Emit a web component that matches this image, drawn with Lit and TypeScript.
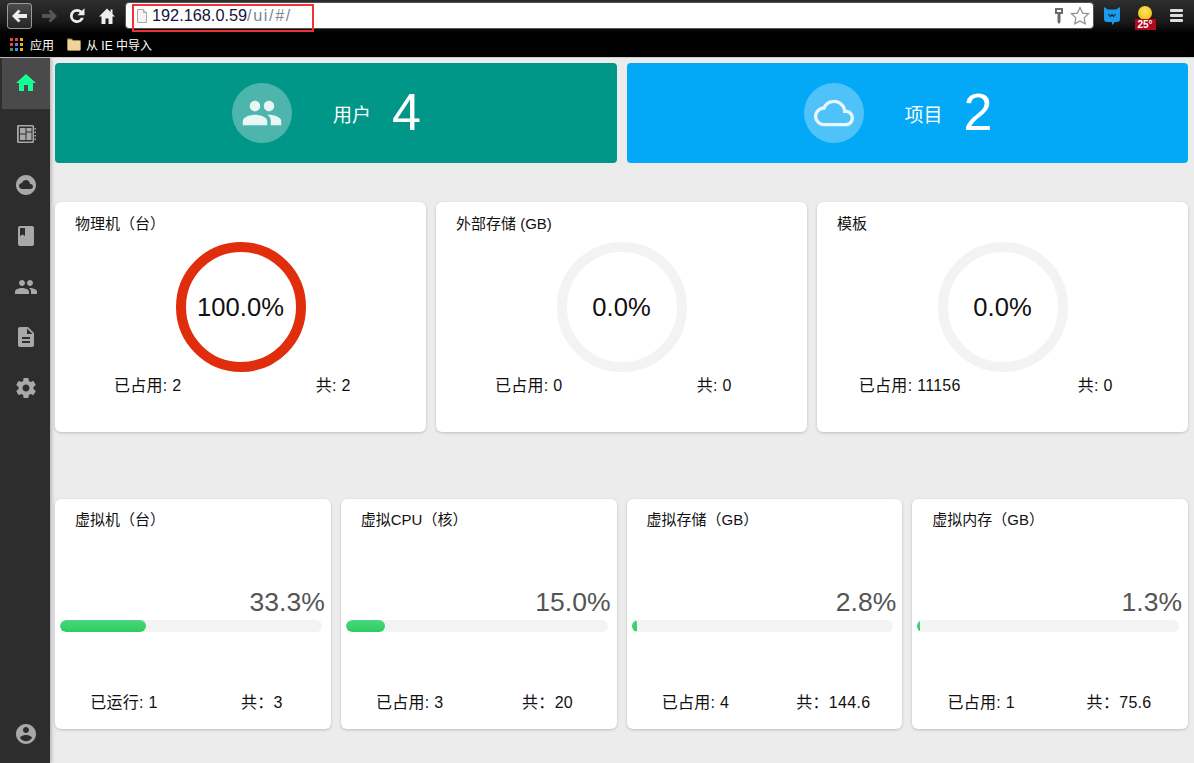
import { LitElement, html, css } from 'lit';
import { customElement } from 'lit/decorators.js';

const ICONS: Record<string, string> = {
  home: 'M10 20v-6h4v6h5v-8h3L12 3 2 12h3v8z',
  cloudCircle: 'M12 2C6.48 2 2 6.48 2 12s4.48 10 10 10 10-4.48 10-10S17.52 2 12 2zm4.5 14H8c-1.66 0-3-1.34-3-3s1.34-3 3-3l.14.01C8.58 8.28 10.13 7 12 7c2.21 0 4 1.79 4 4h.5c1.38 0 2.5 1.12 2.5 2.5S17.88 16 16.5 16z',
  book: 'M18 2H6c-1.1 0-2 .9-2 2v16c0 1.1.9 2 2 2h12c1.1 0 2-.9 2-2V4c0-1.1-.9-2-2-2zM6 4h5v8l-2.5-1.5L6 12V4z',
  people: 'M16 11c1.66 0 2.99-1.34 2.99-3S17.66 5 16 5c-1.66 0-3 1.34-3 3s1.34 3 3 3zm-8 0c1.66 0 2.99-1.34 2.99-3S9.66 5 8 5C6.34 5 5 6.34 5 8s1.34 3 3 3zm0 2c-2.33 0-7 1.17-7 3.5V19h14v-2.5c0-2.33-4.67-3.5-7-3.5zm8 0c-.29 0-.62.02-.97.05 1.16.84 1.97 1.97 1.97 3.45V19h6v-2.5c0-2.33-4.67-3.5-7-3.5z',
  doc: 'M14 2H6c-1.1 0-1.99.9-1.99 2L4 20c0 1.1.89 2 1.99 2H18c1.1 0 2-.9 2-2V8l-6-6zm2 16H8v-2h8v2zm0-4H8v-2h8v2zm-3-5V3.5L18.5 9H13z',
  gear: 'M19.43 12.98c.04-.32.07-.64.07-.98s-.03-.66-.07-.98l2.11-1.65c.19-.15.24-.42.12-.64l-2-3.46c-.12-.22-.39-.3-.61-.22l-2.49 1c-.52-.4-1.08-.73-1.69-.98l-.38-2.65C14.46 2.18 14.25 2 14 2h-4c-.25 0-.46.18-.49.42l-.38 2.65c-.61.25-1.17.59-1.69.98l-2.49-1c-.23-.09-.49 0-.61.22l-2 3.46c-.13.22-.07.49.12.64l2.11 1.65c-.04.32-.07.65-.07.98s.03.66.07.98l-2.11 1.65c-.19.15-.24.42-.12.64l2 3.46c.12.22.39.3.61.22l2.49-1c.52.4 1.08.73 1.69.98l.38 2.65c.03.24.24.42.49.42h4c.25 0 .46-.18.49-.42l.38-2.65c.61-.25 1.17-.59 1.69-.98l2.49 1c.23.09.49 0 .61-.22l2-3.46c.12-.22.07-.49-.12-.64l-2.11-1.65zM12 15.5c-1.93 0-3.5-1.57-3.5-3.5s1.57-3.5 3.5-3.5 3.5 1.57 3.5 3.5-1.57 3.5-3.5 3.5z',
  account: 'M12 2C6.48 2 2 6.48 2 12s4.48 10 10 10 10-4.48 10-10S17.52 2 12 2zm0 3c1.66 0 3 1.34 3 3s-1.34 3-3 3-3-1.34-3-3 1.34-3 3-3zm0 14.2c-2.5 0-4.71-1.28-6-3.22.03-1.99 4-3.08 6-3.08 1.99 0 5.97 1.09 6 3.08-1.29 1.94-3.5 3.22-6 3.22z',
  cloudOutline: 'M19.35 10.04C18.67 6.59 15.64 4 12 4 9.11 4 6.6 5.64 5.35 8.04 2.34 8.36 0 10.91 0 14c0 3.31 2.69 6 6 6h13c2.76 0 5-2.24 5-5 0-2.64-2.05-4.78-4.65-4.96zM19 18H6c-2.21 0-4-1.79-4-4s1.79-4 4-4h.71C7.37 7.69 9.48 6 12 6c3.04 0 5.5 2.46 5.5 5.5v.5H19c1.66 0 3 1.34 3 3s-1.34 3-3 3z',
};

const icon = (name: string, size = 24) => html`
  <svg width=${size} height=${size} viewBox="0 0 24 24" fill="currentColor"><path d=${ICONS[name]}></path></svg>
`;

// notebook with a small dashboard on it, second sidebar entry
const readerIcon = html`
  <svg width="24" height="24" viewBox="0 0 24 24" fill="currentColor">
    <path d="M4.500 3h14c1 0 1.500.6 1.500 1.500v15c0 .9-.5 1.500-1.500 1.500h-14C3.600 21 3 20.400 3 19.500v-15C3 3.600 3.600 3 4.500 3zm.3 1.500v15h13.700v-15z" fill-rule="evenodd"></path>
    <path d="M6 6h5.500v5.500H6zM12.500 6h5v3.500h-5zM12.500 10.500h5V18h-5zM6 12.500h5.500V18H6z"></path>
    <path d="M20.500 6h1.500v1.500h-1.500zM20.500 9.500h1.500V11h-1.500zM20.500 13h1.500v1.500h-1.500zM20.500 16.500h1.500V18h-1.500z"></path>
  </svg>
`;

const APP_COLORS = ['#e8453c', '#e8453c', '#f4b400', '#e8453c', '#4a8af4', '#f4b400', '#2f9e5b', '#4a8af4', '#f4b400'];

interface Gauge { title: string; pct: string; used: string; total: string; color: string; }
interface Bar { title: string; fill: number; label: string; used: string; total: string; }

const GAUGES: Gauge[] = [
  { title: '物理机（台）', pct: '100.0%', used: '已占用: 2', total: '共: 2', color: '#e02d0c' },
  { title: '外部存储 (GB)', pct: '0.0%', used: '已占用: 0', total: '共: 0', color: '#f3f3f3' },
  { title: '模板', pct: '0.0%', used: '已占用: 11156', total: '共: 0', color: '#f3f3f3' },
];

const BARS: Bar[] = [
  { title: '虚拟机（台）', fill: 86, label: '33.3%', used: '已运行: 1', total: '共：3' },
  { title: '虚拟CPU（核）', fill: 39, label: '15.0%', used: '已占用: 3', total: '共：20' },
  { title: '虚拟存储（GB）', fill: 5, label: '2.8%', used: '已占用: 4', total: '共：144.6' },
  { title: '虚拟内存（GB）', fill: 3, label: '1.3%', used: '已占用: 1', total: '共：75.6' },
];

@customElement('app-root')
export class AppRoot extends LitElement {
  static override styles = css`
    :host {
      display: block;
      width: 1194px;
      height: 763px;
      overflow: hidden;
      position: relative;
      font-family: "Liberation Sans", "Noto Sans CJK SC", sans-serif;
      color: #111;
      background: #000;
    }

    .toolbar {
      height: 33px;
      display: flex;
      align-items: flex-start;
      padding-top: 3px;
      box-sizing: border-box;
      background: linear-gradient(#2e2e2e, #1a1a1a 65%, #020202);
      color: #e8e8e8;
    }

    .nav {
      width: 25px;
      height: 26px;
      display: flex;
      align-items: center;
      justify-content: center;
      flex: none;
    }

    .nav.back {
      margin-left: 7px;
      box-sizing: border-box;
      border: 1px solid #9a9a9a;
      border-radius: 3px;
      background: linear-gradient(#4c4c4c, #262626);
    }

    .nav.fwd { margin-left: 4px; color: #555; }
    .nav.reload { margin-left: 3px; }
    .nav.house { margin-left: 5px; }

    .omnibox {
      margin-left: 6px;
      margin-top: -1px;
      width: 969px;
      height: 27px;
      box-sizing: border-box;
      flex: none;
      display: flex;
      align-items: center;
      background: #fff;
      border: 1px solid #555;
      border-radius: 4px;
      padding: 0 3px 0 11px;
      font-size: 16.300px;
    }

    .page-icon { flex: none; margin-right: 5px; }
    .host { color: #14143c; }
    .path { color: #7b8798; flex: 1; letter-spacing: 1.600px; }

    .key { margin-right: 6px; flex: none; }

    .ext { flex: none; display: flex; }
    .ext.cat { margin-left: 9px; margin-top: 3px; }

    .weather {
      margin-left: 13px;
      margin-top: 3px;
      width: 22px;
      height: 26px;
      display: flex;
      flex-direction: column;
      align-items: center;
      flex: none;
    }

    .sun {
      width: 14px;
      height: 14px;
      border-radius: 50%;
      background: radial-gradient(circle at 50% 40%, #ffe75a, #eab308);
      flex: none;
    }

    .temp {
      width: 21px;
      height: 11px;
      margin-top: -1px;
      background: #b0081c;
      color: #fff;
      font-size: 10px;
      line-height: 11px;
      font-weight: 700;
      text-align: center;
    }

    .menu {
      margin-left: 14px;
      margin-top: 6px;
      width: 13px;
      display: flex;
      flex-direction: column;
      gap: 2px;
      flex: none;
    }

    .menu i {
      display: block;
      height: 3px;
      border-radius: 1px;
      background: #ddd;
    }

    .bookmarks {
      height: 24px;
      box-sizing: border-box;
      padding: 0 0 2px 10px;
      background: #000;
      color: #fff;
      font-size: 12px;
      display: flex;
      align-items: center;
    }

    .apps {
      display: grid;
      grid-template-columns: repeat(3, 3px);
      gap: 2px;
      margin-right: 7px;
    }

    .apps i { display: block; width: 3px; height: 3px; }
    .folder { margin-left: 12px; margin-right: 5px; }

    .shell {
      height: 706px;
      display: flex;
      border-top: 1px solid #cfcfcf;
      box-sizing: border-box;
      background: #ececec;
    }

    .sidebar {
      width: 50px;
      flex: none;
      box-sizing: border-box;
      padding-left: 2px;
      background: #2d2d2d;
      box-shadow: 1px 0 4px rgba(0, 0, 0, 0.3);
      color: #a8a8a8;
      display: flex;
      flex-direction: column;
    }

    .side-item {
      height: 50.800px;
      display: flex;
      align-items: center;
      justify-content: center;
      flex: none;
    }

    .side-item.active {
      background: #4a4a4a;
      color: #14ff96;
    }

    .side-item.bottom { margin-top: auto; margin-bottom: 4px; }

    .main {
      flex: 1;
      padding: 5px 6px 0 5px;
    }

    .hero-row, .gauge-row, .bar-row {
      display: grid;
      gap: 10px;
    }

    .hero-row { grid-template-columns: 1fr 1fr; }
    .gauge-row { grid-template-columns: repeat(3, 1fr); margin-top: 39px; }
    .bar-row { grid-template-columns: repeat(4, 1fr); margin-top: 67px; }

    .hero {
      height: 100px;
      border-radius: 4px;
      color: #fff;
      display: flex;
      align-items: center;
      padding-left: 177px;
    }

    .hero.teal { background: #009688; }
    .hero.blue { background: #03a9f6; }

    .hero-icon {
      width: 60px;
      height: 60px;
      border-radius: 50%;
      background: rgba(255, 255, 255, 0.3);
      display: flex;
      align-items: center;
      justify-content: center;
      color: rgba(255, 255, 255, 0.87);
      flex: none;
    }

    .hero-label { margin-left: 41px; font-size: 19px; }
    .hero-num { margin-left: 21px; font-size: 52px; line-height: 60px; margin-bottom: 2px; }

    .card {
      height: 230px;
      box-sizing: border-box;
      background: #fff;
      border-radius: 6px;
      box-shadow: 0 1px 3px rgba(0, 0, 0, 0.2);
      padding-top: 12px;
    }

    .bar-card { padding-top: 11px; }

    .title {
      font-size: 15px;
      line-height: 20px;
      padding-left: 20px;
    }

    .donut {
      width: 130px;
      height: 130px;
      box-sizing: border-box;
      margin: 8px auto 0;
      border-radius: 50%;
      border: 10px solid;
      display: flex;
      align-items: center;
      justify-content: center;
      font-size: 25.600px;
    }

    .stats {
      display: grid;
      grid-template-columns: 1fr 1fr;
      text-align: center;
      font-size: 16px;
      line-height: 20px;
      letter-spacing: 0.300px;
      margin-top: 4px;
    }

    .bar-card .stats { margin-top: 61px; }

    .pct {
      margin-top: 57px;
      padding-right: 6px;
      text-align: right;
      font-size: 26.500px;
      line-height: 30px;
      color: #555;
    }

    .track {
      height: 12px;
      margin: 3px 9px 0 5px;
      border-radius: 6px;
      background: #f3f3f3;
      overflow: hidden;
    }

    .fill {
      height: 100%;
      border-radius: 6px;
      background: linear-gradient(#4bd681, #2ecc5f);
    }

    .annotation {
      position: absolute;
      left: 132px;
      top: 4px;
      width: 182px;
      height: 28px;
      box-sizing: border-box;
      border: 2px solid #ee3338;
      pointer-events: none;
    }
  `;

  renderChrome() {
    return html`
      <div class="toolbar">
        <div class="nav back">
          <svg width="18" height="18" viewBox="0 0 18 18" fill="#eee"><path d="M7.500 2.500l2 2L7 7h9v4H7l2.500 2.500-2 2L1 9z"></path></svg>
        </div>
        <div class="nav fwd">
          <svg width="18" height="18" viewBox="0 0 18 18" fill="currentColor"><path d="M10.500 2.500l-2 2L11 7H2v4h9l-2.500 2.500 2 2L17 9z"></path></svg>
        </div>
        <div class="nav reload">
          <svg width="18" height="18" viewBox="0 0 18 18" fill="#eee"><path d="M9 2a7 7 0 1 0 6.800 8.700h-3A4.200 4.200 0 1 1 9 4.800c1.100 0 2 .4 2.800 1L9.500 8.200H16.500V1.200l-2.600 2.600A7 7 0 0 0 9 2z"></path></svg>
        </div>
        <div class="nav house">
          <svg width="18" height="18" viewBox="0 0 18 18" fill="#eee"><path d="M9 1.500L1 9.500h2.500V17H7.500v-5.500h3V17h4V9.500H17L14.500 7V2.500H12.500v2.500z"></path></svg>
        </div>
        <div class="omnibox">
          <svg class="page-icon" width="10" height="14" viewBox="0 0 10 14"><path d="M.5.500h6l3 3v10h-9z" fill="#f4f4f4" stroke="#a8a8a8"></path><path d="M6.500.500v3h3" fill="#ddd" stroke="#a8a8a8"></path></svg>
          <span class="host">192.168.0.59</span><span class="path">/ui/#/</span>
          <svg class="key" width="10" height="18" viewBox="0 0 10 18" fill="#6a6a6a"><path d="M1 1h8v6H6.500v8l-1.500 2-1.500-2V7H1zM3 3v2h4V3z" fill-rule="evenodd"></path></svg>
          <svg width="20" height="20" viewBox="0 0 20 20" fill="#fff" stroke="#8f8f8f" stroke-width="1.200"><path d="M10 1.500l2.600 5.600 6 .7-4.500 4.100 1.200 6L10 15l-5.300 2.900 1.200-6L1.400 7.800l6-.7z"></path></svg>
        </div>
        <div class="ext cat">
          <svg width="18" height="20" viewBox="0 0 18 20"><path d="M1 1l4 2.500h8L17 1v12c0 2-1 3-3 3h-2l-3 3v-3H4c-2 0-3-1-3-3z" fill="#1e9be8"></path><path d="M5.500 8l2 2.500L9 8.500l1.500 2L12.500 8" fill="none" stroke="#0b2b4a" stroke-width="1.200"></path></svg>
        </div>
        <div class="weather"><div class="sun"></div><div class="temp">25°</div></div>
        <div class="menu"><i></i><i></i><i></i></div>
      </div>
      <div class="bookmarks">
        <div class="apps">${APP_COLORS.map((c) => html`<i style="background:${c}"></i>`)}</div>
        <span>应用</span>
        <svg class="folder" width="15" height="13" viewBox="0 0 15 13">
          <path d="M1.500 1h4l1.500 1.500h6.500q1 0 1 1V11q0 1.500-1 1.500h-11q-1 0-1-1.500V2q0-1 1-1z" fill="#efd39a" stroke="#a8854f"></path>
        </svg>
        <span>从 IE 中导入</span>
      </div>
    `;
  }

  renderGauge(g: Gauge) {
    return html`
      <div class="card">
        <div class="title">${g.title}</div>
        <div class="donut" style="border-color:${g.color}">${g.pct}</div>
        <div class="stats"><span>${g.used}</span><span>${g.total}</span></div>
      </div>
    `;
  }

  renderBar(b: Bar) {
    return html`
      <div class="card bar-card">
        <div class="title">${b.title}</div>
        <div class="pct">${b.label}</div>
        <div class="track"><div class="fill" style="width:${b.fill}px"></div></div>
        <div class="stats"><span>${b.used}</span><span>${b.total}</span></div>
      </div>
    `;
  }

  override render() {
    return html`
      ${this.renderChrome()}
      <div class="shell">
        <nav class="sidebar">
          <div class="side-item active">${icon('home')}</div>
          <div class="side-item">${readerIcon}</div>
          <div class="side-item">${icon('cloudCircle')}</div>
          <div class="side-item">${icon('book')}</div>
          <div class="side-item">${icon('people')}</div>
          <div class="side-item">${icon('doc')}</div>
          <div class="side-item">${icon('gear')}</div>
          <div class="side-item bottom">${icon('account')}</div>
        </nav>
        <main class="main">
          <div class="hero-row">
            <div class="hero teal">
              <div class="hero-icon">${icon('people', 42)}</div>
              <span class="hero-label">用户</span>
              <span class="hero-num">4</span>
            </div>
            <div class="hero blue">
              <div class="hero-icon">${icon('cloudOutline', 40)}</div>
              <span class="hero-label">项目</span>
              <span class="hero-num">2</span>
            </div>
          </div>
          <div class="gauge-row">${GAUGES.map((g) => this.renderGauge(g))}</div>
          <div class="bar-row">${BARS.map((b) => this.renderBar(b))}</div>
        </main>
      </div>
      <div class="annotation"></div>
    `;
  }
}
